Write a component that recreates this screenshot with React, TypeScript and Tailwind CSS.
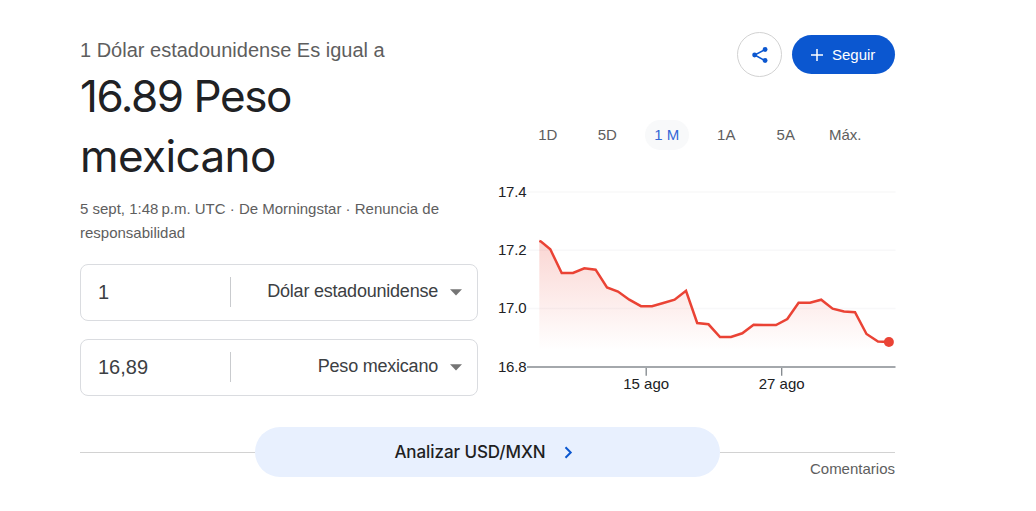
import { useState } from "react"

const ranges = ["1D", "5D", "1 M", "1A", "5A", "Máx."]

const points = [
    [541, 241.5], [550.3, 249.3], [561.7, 273], [573, 273], [584.3, 268.3], [595.6, 269.7],
    [607, 287.5], [618, 291.5], [629.3, 299.7], [641, 306.2], [652, 306.2], [663.3, 303],
    [674.6, 299.7], [686, 290.8], [697.2, 323], [708.5, 324.3], [720, 337], [731, 337],
    [742.3, 333.3], [753.6, 324.8], [765, 325], [776, 325], [787.3, 319], [798.6, 302.7],
    [810, 302.7], [821.2, 299.7], [832.6, 308.7], [844, 311.5], [855, 312.2], [866.5, 334],
    [878, 341.5], [888.7, 341.9],
]

const gridRows = [
    { label: "17.4", y: 192 },
    { label: "17.2", y: 250.3 },
    { label: "17.0", y: 308.5 },
]

const ticks = [
    { label: "15 ago", x: 646.2 },
    { label: "27 ago", x: 781.7 },
]

const Chart = () => {
    const line = points.map((p) => p.join(",")).join(" ")

    return (
        <svg viewBox="498 180 398 216" className="block w-[398px] h-[216px] font-['Liberation_Sans',Arial,sans-serif] text-[15px]">
            <defs>
                <linearGradient id="area" gradientUnits="userSpaceOnUse" x1="0" y1="241" x2="0" y2="350">
                    <stop offset="0" stopColor="#ea4335" stopOpacity="0.22" />
                    <stop offset="1" stopColor="#ea4335" stopOpacity="0" />
                </linearGradient>
            </defs>

            {gridRows.map((row) => (
                <g key={row.label}>
                    <line x1="527" x2="895.5" y1={row.y} y2={row.y} stroke="#f8f8f9" strokeWidth="1.6" />
                    <text x="498" y={row.y + 4.7} fill="#202124" textLength="28.5">{row.label}</text>
                </g>
            ))}

            <polygon points={`539.3,350 539.3,241 ${line} 888.7,350`} fill="url(#area)" />
            <polyline points={`539.3,240.8 ${line}`} fill="none" stroke="#ea4335" strokeWidth="2.5" />
            <circle cx="888.9" cy="342" r="5" fill="#ea4335" />

            <line x1="527" x2="895.5" y1="367" y2="367" stroke="#a4a8ac" strokeWidth="2" />
            <text x="498" y="372" fill="#202124" textLength="28.5">16.8</text>

            {ticks.map((tick) => (
                <g key={tick.label}>
                    <line x1={tick.x} x2={tick.x} y1="368" y2="375.7" stroke="#80868b" strokeWidth="1.3" />
                    <text x={tick.x} y="389" textAnchor="middle" fill="#202124">{tick.label}</text>
                </g>
            ))}
        </svg>
    )
}

type CurrencyProps = {
    amount: string
    currency: string
}

const CurrencyRow = ({ amount, currency }: CurrencyProps) => {
    const [value, setValue] = useState(amount)

    return (
        <div className="flex items-center h-[57px] w-[398px] rounded-lg border border-[#dadce0] text-[#3c4043]">
            <input
                value={value}
                onChange={(e) => setValue(e.target.value)}
                className="w-[149px] pl-[17px] pb-[2px] text-[20px] leading-[24px] outline-none"
            />
            <div className="mb-[2px] w-px h-[30px] bg-[#c9cbce]"></div>
            <button className="flex flex-1 items-center justify-end pr-[15px] gap-3">
                <span className="pb-[3px] text-[18px] leading-[24px] tracking-[-0.22px]">{currency}</span>
                <svg viewBox="0 0 12 7" className="w-3 h-[7px]">
                    <path d="M0 0.3h12L6 6.6z" fill="#757575" />
                </svg>
            </button>
        </div>
    )
}

const App = () => {
    const [range, setRange] = useState("1 M")

    return (
        <main className="w-full h-[511px] bg-white pl-20 pt-8 font-['Liberation_Sans',Arial,sans-serif]">
            <div className="flex w-[816px] justify-between">
                <section className="w-[398px]">
                    <p className="mt-[5px] text-[20px] leading-[26px] text-[#5e5e5e]">1 Dólar estadounidense Es igual a</p>
                    <h1 className="mt-[3px] w-[300px] font-['Inter',sans-serif] text-[44px] leading-[60px] text-[#202124]">
                        <span className="tracking-[-1.45px]">16.89 Peso </span>
                        <span className="tracking-[-0.6px]">mexicano</span>
                    </h1>
                    <p className="mt-[11px] text-[15px] leading-6 text-[#5e5e5e]">
                        5 sept, 1:48&#8239;p.m. UTC · De Morningstar · Renuncia de responsabilidad
                    </p>
                    <div className="mt-[19px] flex flex-col gap-[18px]">
                        <CurrencyRow amount="1" currency="Dólar estadounidense" />
                        <CurrencyRow amount="16,89" currency="Peso mexicano" />
                    </div>
                </section>

                <section className="w-[398px]">
                    <div className="flex items-center justify-end gap-[10px] pr-px">
                        <button className="flex items-center justify-center size-[45px] rounded-full border border-[#d2d2d2]">
                            <svg viewBox="0 0 16 16" className="size-4" fill="#0b57d0">
                                <path d="M13 2.6L2.7 8 13 13.7" fill="none" stroke="#0b57d0" strokeWidth="1.5" />
                                <circle cx="13.1" cy="2.5" r="2.4" />
                                <circle cx="2.6" cy="8" r="2.4" />
                                <circle cx="13.1" cy="13.5" r="2.4" />
                            </svg>
                        </button>
                        <button className="flex items-center h-[39px] w-[103px] rounded-full bg-[#0b57d0] pl-[19px] gap-[9px] text-[15px] text-white">
                            <svg viewBox="0 0 12 12" className="size-3">
                                <path d="M6 0v12M0 6h12" stroke="white" strokeWidth="1.5" />
                            </svg>
                            <span className="pt-px">Seguir</span>
                        </button>
                    </div>

                    <div className="mt-[43px] ml-[28px] flex text-[15px] leading-[30px] text-[#5e5e5e]">
                        {ranges.map((r) => (
                            <button
                                key={r}
                                onClick={() => setRange(r)}
                                className={`mr-4 h-[30px] w-[43.5px] rounded-full text-center ${
                                    r === range ? "bg-[#f8f9fa] text-[#3367d6]" : ""
                                }`}
                            >
                                {r}
                            </button>
                        ))}
                    </div>

                    <div className="mt-[30px]">
                        <Chart />
                    </div>
                </section>
            </div>

            <footer className="mt-[31px] w-[815px]">
                <div className="flex items-center">
                    <div className="h-px w-[175px] bg-[#d2d2d2]"></div>
                    <button className="flex items-center justify-center h-[50px] w-[465px] rounded-full bg-[#e8f0fe] gap-[18px] pr-[8px] font-['Inter',sans-serif] text-[17px] font-medium tracking-[-0.08px] text-[#1f1f1f]">
                        <span className="pt-[2px]">Analizar USD/MXN</span>
                        <svg viewBox="0 0 9 13" className="w-[9px] h-[13px]">
                            <path d="M1.5 1.3L6.7 6.5L1.5 11.7" fill="none" stroke="#0b57d0" strokeWidth="2" />
                        </svg>
                    </button>
                    <div className="h-px w-[175px] bg-[#d2d2d2]"></div>
                </div>
                <p className="-mt-[17px] text-right text-[15px] leading-[18px] text-[#5e5e5e]">Comentarios</p>
            </footer>
        </main>
    )
}

export default App
